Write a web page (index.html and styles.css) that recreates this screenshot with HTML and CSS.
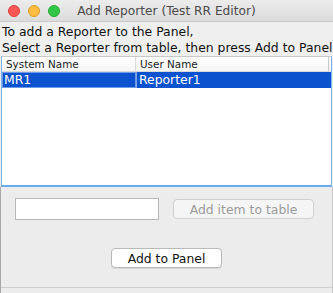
FILE: index.html
```html
<!DOCTYPE html>
<html>
<head>
<meta charset="utf-8">
<link rel="stylesheet" href="styles.css">
</head>
<body>
<div class="window">
  <div class="titlebar">
    <div class="lights">
      <span class="light red"></span>
      <span class="light yellow"></span>
      <span class="light green"></span>
    </div>
    <div class="title">Add Reporter (Test RR Editor)</div>
    <div></div>
  </div>
  <div class="intro">
    <div class="line">To add a Reporter to the Panel,</div>
    <div class="line">Select a Reporter from table, then press Add to Panel</div>
  </div>
  <div class="table">
    <div class="thead">
      <div class="th c1">System Name</div>
      <div class="th c2">User Name</div>
      <div class="th end"></div>
    </div>
    <div class="row selected">
      <div class="td c1 focus">MR1</div>
      <div class="td c2">Reporter1</div>
    </div>
  </div>
  <div class="lower">
    <div class="addrow">
      <div class="field"></div>
      <div class="btn disabled">Add item to table</div>
    </div>
    <div class="panelrow">
      <div class="btn primary">Add to Panel</div>
    </div>
    <div class="bottomline"></div>
  </div>
</div>
</body>
</html>
```
FILE: styles.css
```css
html, body {
  margin: 0;
  padding: 0;
}
body {
  width: 333px;
  height: 293px;
  overflow: hidden;
  background: #ececec;
  font-family: "DejaVu Sans", sans-serif;
}
.window {
  display: flex;
  flex-direction: column;
  height: 293px;
}
.titlebar {
  height: 22px;
  background: linear-gradient(#ececec, #dcdcdc);
  border-bottom: 1px solid #c9c9c9;
  box-sizing: border-box;
  display: grid;
  grid-template-columns: 1fr auto 1fr;
  align-items: center;
}
.lights {
  display: flex;
  gap: 8px;
  padding-left: 8px;
}
.light {
  width: 12px;
  height: 12px;
  border-radius: 50%;
  box-sizing: border-box;
}
.red { background: #fc5753; border: 1px solid #df3d39; }
.yellow { background: #fdbc40; border: 1px solid #de9e25; }
.green { background: #33c748; border: 1px solid #27aa35; }
.title {
  text-align: center;
  font-size: 12.2px;
  color: #4a4a4a;
  white-space: nowrap;
}
.intro {
  padding: 2px 0 0 2px;
  font-size: 12.4px;
  color: #111;
  line-height: 16px;
  background: #efefef;
}
.line {
  white-space: nowrap;
}
.table {
  margin: 0 1px 0 1px;
  height: 131px;
  background: #fff;
  border: 1px solid #7db4ec;
  border-top-color: #c8c8c8;
  border-bottom: 2px solid #6aaaf0;
  box-sizing: border-box;
}
.thead {
  display: flex;
  height: 14px;
  border-bottom: 1px solid #d9d9d9;
  background: linear-gradient(#ffffff, #f5f5f5);
  font-size: 10.4px;
  color: #222;
  line-height: 14px;
}
.th {
  padding-left: 4px;
  box-sizing: border-box;
}
.th.c1 { width: 134px; border-right: 1px solid #d9d9d9; }
.th.c2 { flex: 1; }
.th.end { width: 3px; border-left: 1px solid #c8c8c8; padding: 0; }
.row {
  display: flex;
  height: 16px;
  font-size: 12.4px;
  line-height: 15px;
}
.row.selected {
  background: #0b52cf;
  color: #fff;
}
.td {
  padding-left: 2px;
  box-sizing: border-box;
}
.td.c1 { width: 134px; }
.td.focus { border: 1px solid #6d9ae8; padding-left: 1px; line-height: 13px; }
.td.c2 { flex: 1; border-left: 1px solid #7fa4e8; margin-right: 3px; }
.lower {
  flex: 1;
  display: flex;
  flex-direction: column;
  border-left: 1px solid #a8a8a8;
  border-right: 1px solid #c8c8c8;
}
.addrow {
  display: flex;
  align-items: center;
  gap: 14px;
  padding: 11px 0 0 14px;
}
.field {
  width: 144px;
  height: 22px;
  box-sizing: border-box;
  background: #fff;
  border: 1px solid #b8b8b8;
}
.btn {
  height: 20px;
  box-sizing: border-box;
  border-radius: 4px;
  font-size: 12.4px;
  display: flex;
  align-items: center;
  justify-content: center;
}
.btn.disabled {
  width: 141px;
  background: #f5f5f5;
  border: 1px solid #d0d0d0;
  color: #9b9b9b;
}
.panelrow {
  display: flex;
  justify-content: center;
  padding-top: 28px;
}
.btn.primary {
  width: 111px;
  background: #fff;
  border: 1px solid #b9b9b9;
  color: #111;
  box-shadow: 0 1px 0 #d8d8d8;
}
.bottomline {
  margin-top: 19px;
  border-top: 1px solid #cfcfcf;
}
```
